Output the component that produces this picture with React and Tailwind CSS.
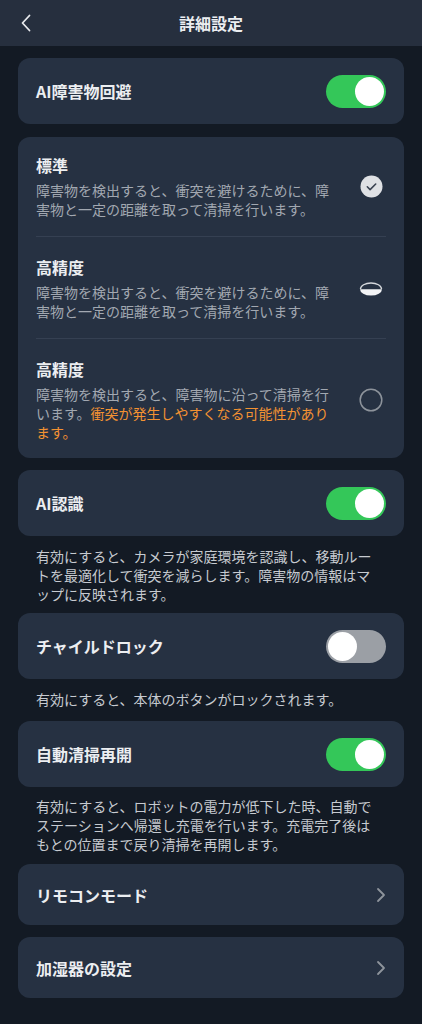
import React from "react";

const FONT = { fontFamily: '"Noto Sans CJK JP", "Noto Sans", Inter, sans-serif' };

function Toggle({ on }) {
  return (
    <div
      className={`relative h-[33px] w-[60px] rounded-full shrink-0 ${on ? "bg-[#34c759]" : "bg-[#9b9fa5]"}`}
    >
      <div
        className={`absolute top-[2px] h-[29px] w-[29px] rounded-full bg-white ${on ? "right-[2px]" : "left-[2px]"}`}
      />
    </div>
  );
}

function ToggleCard({ title, on }) {
  return (
    <div className="flex h-[66px] items-center justify-between rounded-[12px] bg-[#263142] px-[18px]">
      <span className="text-[16px] font-semibold leading-[22px] text-[#eceef1]">{title}</span>
      <Toggle on={on} />
    </div>
  );
}

function Chevron() {
  return (
    <svg width="10" height="16" viewBox="0 0 10 16" fill="none">
      <path d="M2 2l6 6-6 6" stroke="#8e949c" strokeWidth="1.8" strokeLinecap="round" strokeLinejoin="round" />
    </svg>
  );
}

function NavCard({ title }) {
  return (
    <div className="flex h-[61px] items-center justify-between rounded-[12px] bg-[#263142] pl-[18px] pr-[18px]">
      <span className="text-[16px] font-semibold leading-[22px] text-[#eceef1]">{title}</span>
      <Chevron />
    </div>
  );
}

function CheckIcon() {
  return (
    <svg width="23" height="23" viewBox="0 0 23 23">
      <circle cx="11.5" cy="11.5" r="11" fill="#dfe1e5" />
      <path d="M7.3 11.8l2.8 2.8 5.6-5.6" stroke="#3a4352" strokeWidth="1.6" fill="none" strokeLinecap="round" strokeLinejoin="round" />
    </svg>
  );
}

function HalfIcon() {
  return (
    <svg width="24" height="14" viewBox="0 0 24 14">
      <path d="M1.5 7 A10.5 6 0 0 1 22.5 7" stroke="#d5d8dc" strokeWidth="1.4" fill="none" />
      <path d="M1 7.2 H23 A11 6.3 0 0 1 1 7.2 Z" fill="#f2f3f5" />
    </svg>
  );
}

function EmptyRadio() {
  return (
    <svg width="24" height="24" viewBox="0 0 24 24">
      <circle cx="12" cy="12" r="10.8" stroke="#8d939b" strokeWidth="1.5" fill="none" />
    </svg>
  );
}

function ModeItem({ title, children, icon, border, pad }) {
  return (
    <div className={`flex items-center justify-between ${pad} ${border ? "border-t border-[#354052]" : ""}`}>
      <div className="w-[300px]">
        <div className="text-[16px] font-semibold leading-[22px] text-[#eceef1]">{title}</div>
        <div className="mt-[5px] text-[14px] leading-[19px] text-[#a2a8b1]">{children}</div>
      </div>
      <div className="mr-[3px] flex w-[24px] justify-center">{icon}</div>
    </div>
  );
}

function Desc({ children }) {
  return (
    <p className="w-[360px] pl-[18px] text-[14px] leading-[19px] text-[#c6cad0]">{children}</p>
  );
}

export default function App() {
  return (
    <div style={FONT} className="min-h-[1024px] w-[422px] bg-[#131a24]">
      <div className="relative flex h-[46px] items-center justify-center bg-[#262f3e]">
        <div className="absolute left-[20px] top-[14px]">
          <svg width="12" height="18" viewBox="0 0 12 18" fill="none">
            <path d="M9.5 1.5L2.5 9l7 7.5" stroke="#e8eaed" strokeWidth="1.8" strokeLinecap="round" strokeLinejoin="round" />
          </svg>
        </div>
        <span className="text-[16px] font-semibold text-[#eceef1]">詳細設定</span>
      </div>

      <div className="flex flex-col px-[18px] pt-[12px]">
        <ToggleCard title="AI障害物回避" on />

        <div className="mt-[13px] rounded-[12px] bg-[#263142] px-[18px]">
          <ModeItem title="標準" icon={<CheckIcon />} pad="pt-[17px] pb-[17px]">
            障害物を検出すると、衝突を避けるために、障害物と一定の距離を取って清掃を行います。
          </ModeItem>
          <ModeItem title="高精度" icon={<HalfIcon />} border pad="pt-[19px] pb-[17px]">
            障害物を検出すると、衝突を避けるために、障害物と一定の距離を取って清掃を行います。
          </ModeItem>
          <ModeItem title="高精度" icon={<EmptyRadio />} border pad="pt-[19px] pb-[16px]">
            障害物を検出すると、障害物に沿って清掃を行います。
            <span className="text-[#f39232]">衝突が発生しやすくなる可能性があります。</span>
          </ModeItem>
        </div>

        <div className="mt-[12px]">
          <ToggleCard title="AI認識" on />
        </div>
        <div className="mt-[11px]">
          <Desc>有効にすると、カメラが家庭環境を認識し、移動ルートを最適化して衝突を減らします。障害物の情報はマップに反映されます。</Desc>
        </div>

        <div className="mt-[9px]">
          <ToggleCard title="チャイルドロック" on={false} />
        </div>
        <div className="mt-[11px]">
          <Desc>有効にすると、本体のボタンがロックされます。</Desc>
        </div>

        <div className="mt-[12px]">
          <ToggleCard title="自動清掃再開" on />
        </div>
        <div className="mt-[10px]">
          <Desc>有効にすると、ロボットの電力が低下した時、自動でステーションへ帰還し充電を行います。充電完了後はもとの位置まで戻り清掃を再開します。</Desc>
        </div>

        <div className="mt-[10px]">
          <NavCard title="リモコンモード" />
        </div>
        <div className="mt-[12px]">
          <NavCard title="加湿器の設定" />
        </div>
      </div>
    </div>
  );
}
